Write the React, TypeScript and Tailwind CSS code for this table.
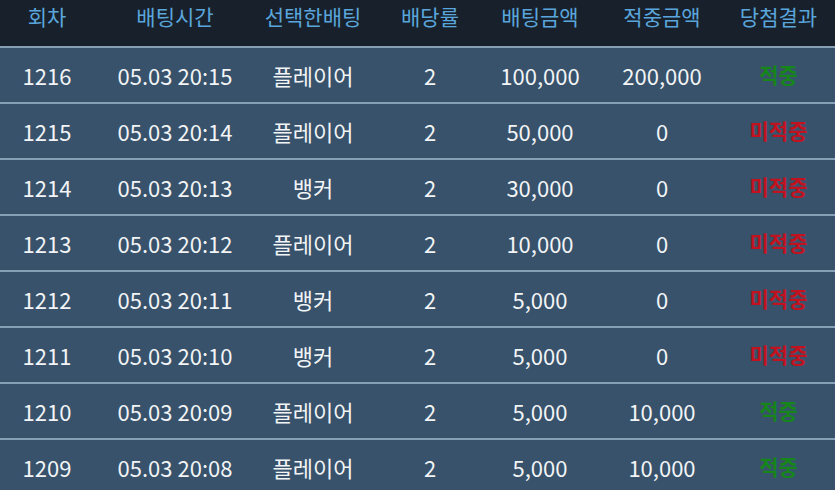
const rows = [
  { no: 1216, time: '05.03 20:15', pick: '플레이어', odds: 2, bet: '100,000', win: '200,000', hit: true },
  { no: 1215, time: '05.03 20:14', pick: '플레이어', odds: 2, bet: '50,000', win: '0', hit: false },
  { no: 1214, time: '05.03 20:13', pick: '뱅커', odds: 2, bet: '30,000', win: '0', hit: false },
  { no: 1213, time: '05.03 20:12', pick: '플레이어', odds: 2, bet: '10,000', win: '0', hit: false },
  { no: 1212, time: '05.03 20:11', pick: '뱅커', odds: 2, bet: '5,000', win: '0', hit: false },
  { no: 1211, time: '05.03 20:10', pick: '뱅커', odds: 2, bet: '5,000', win: '0', hit: false },
  { no: 1210, time: '05.03 20:09', pick: '플레이어', odds: 2, bet: '5,000', win: '10,000', hit: true },
  { no: 1209, time: '05.03 20:08', pick: '플레이어', odds: 2, bet: '5,000', win: '10,000', hit: true },
]

const heads = ['회차', '배팅시간', '선택한배팅', '배당률', '배팅금액', '적중금액', '당첨결과']
const cols = 'grid grid-cols-[94px_162px_114px_120px_100px_144px_1fr] items-center text-center'

export default function App() {
  return (
    <div
      className="w-[835px] h-[490px] overflow-hidden bg-[#37526a]"
      style={{ fontFamily: '"Noto Sans CJK KR", "Noto Sans", sans-serif' }}
    >
      <div className={`${cols} h-[46px] bg-[#18212b] text-[21px] text-[#5aa6dc] pb-[12px]`}>
        {heads.map((h, i) => (
          <div key={h} className={i === 6 ? 'pr-[12px]' : ''}>{h}</div>
        ))}
      </div>
      {rows.map((r) => (
        <div key={r.no} className={`${cols} h-[56px] border-t-2 border-[#869fb4] text-[22px] text-[#f2f4f6]`}>
          <div>{r.no}</div>
          <div>{r.time}</div>
          <div>{r.pick}</div>
          <div>{r.odds}</div>
          <div>{r.bet}</div>
          <div>{r.win}</div>
          <div className={`pr-[12px] text-[21px] font-bold ${r.hit ? 'text-[#16861a]' : 'text-[#c3121f]'}`}>
            {r.hit ? '적중' : '미적중'}
          </div>
        </div>
      ))}
    </div>
  )
}
